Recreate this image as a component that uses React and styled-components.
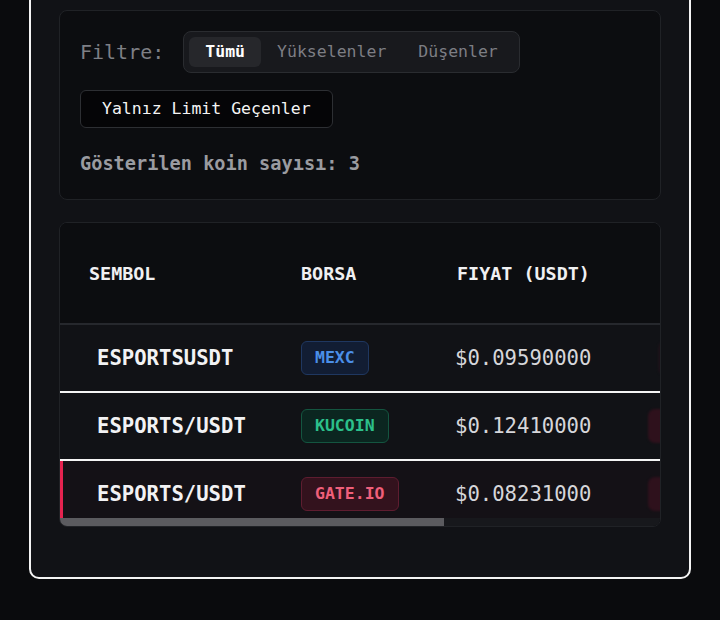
import React from 'react'
import styled, { createGlobalStyle } from 'styled-components'

const GlobalStyle = createGlobalStyle`
  html, body {
    margin: 0;
    padding: 0;
    background: #0a0b0d;
    font-family: "DejaVu Sans Mono", "Liberation Mono", monospace;
    overflow: hidden;
  }
  * { box-sizing: border-box; }
`;

const Card = styled.div`
margin: -22px 29px 0;
padding: 30px 28px 50px;
background: #111216;
border: 2px solid #f4f4f4;
border-radius: 10px;
display: flex;
flex-direction: column;
gap: 22px;
`;

const Panel = styled.div`
background: #0c0d10;
border: 1px solid #202226;
border-radius: 8px;
`;

const FilterPanel = styled(Panel)`
padding: 20px 20px 23px;
display: flex;
flex-direction: column;
align-items: flex-start;
`;

const FilterRow = styled.div`
display: flex;
align-items: center;
gap: 19px;
`;

const Label = styled.span`
color: #7e7f85;
font-size: 20px;
`;

const Segmented = styled.div`
display: flex;
padding: 5px;
background: #18191d;
border: 1px solid #2a2c30;
border-radius: 8px;
`;

const Segment = styled.div`
height: 30px;
line-height: 30px;
padding: 0 16px;
font-size: 16.5px;
border-radius: 6px;
color: ${({ active }) => (active ? '#ffffff' : '#7d7e84')};
font-weight: ${({ active }) => (active ? 700 : 400)};
background: ${({ active }) => (active ? '#26272b' : 'transparent')};
`;

const LimitButton = styled.div`
margin-top: 17px;
height: 38px;
line-height: 36px;
padding: 0 21px;
font-size: 16.5px;
color: #f4f4f4;
background: #050507;
border: 1px solid #2d2f33;
border-radius: 6px;
`;

const Count = styled.div`
margin-top: 24px;
line-height: 24px;
font-size: 18.6px;
font-weight: 700;
color: #9a9ba0;
`;

const TablePanel = styled(Panel)`
overflow: hidden;
`;

const Scroller = styled.div`
height: 295px;
overflow: hidden;
`;

const ScrollTrack = styled.div`
height: 8px;
background: #17181c;
`;

const ScrollThumb = styled.div`
height: 100%;
width: 64%;
background: #5b5b5f;
`;

const Table = styled.div`
width: 937px;
`;

const Row = styled.div`
display: grid;
grid-template-columns: 221px 156px 191px 1fr;
align-items: center;
height: ${({ head }) => (head ? '102px' : '68px')};
background: ${({ head, alert }) => (head ? '#0c0d10' : alert ? '#141116' : '#111216')};
border-bottom: 2px solid ${({ head }) => (head ? '#26282d' : '#f4f4f4')};
box-shadow: ${({ alert }) => (alert ? 'inset 3px 0 0 #e5234f' : 'none')};
`;

const HeadCell = styled.div`
padding-left: ${({ pad }) => pad}px;
font-size: 18.4px;
font-weight: 700;
color: #f0f0f2;
`;

const Cell = styled.div`
padding-left: ${({ pad }) => pad}px;
display: flex;
`;

const Symbol = styled.span`
font-size: 20.6px;
font-weight: 700;
color: #f2f2f4;
`;

const Price = styled.span`
font-size: 20.6px;
color: #d6d6da;
`;

const badgeColors = {
  blue: { bg: '#121d33', border: '#1f3760', fg: '#4b8fe8' },
  green: { bg: '#0b2620', border: '#145540', fg: '#2cc08b' },
  red: { bg: '#33121d', border: '#5e1d30', fg: '#ef5f7a' },
};

const Badge = styled.span`
height: 34px;
line-height: 32px;
padding: 0 13px;
font-size: 16.5px;
font-weight: 700;
border-radius: 6px;
background: ${({ tone }) => badgeColors[tone].bg};
border: 1px solid ${({ tone }) => badgeColors[tone].border};
color: ${({ tone }) => badgeColors[tone].fg};
`;

/* 24h change pill, mostly scrolled out of view */
const ChangeChip = styled.span`
width: 92px;
height: 34px;
border-radius: 7px;
background: ${({ faint }) => (faint ? '#1c1219' : '#2e111c')};
filter: blur(1px);
`;

const coins = [
  { symbol: 'ESPORTSUSDT', exchange: 'MEXC', tone: 'blue', price: '$0.09590000', changePad: 30, faint: true },
  { symbol: 'ESPORTS/USDT', exchange: 'KUCOIN', tone: 'green', price: '$0.12410000', changePad: 20 },
  { symbol: 'ESPORTS/USDT', exchange: 'GATE.IO', tone: 'red', price: '$0.08231000', changePad: 20, alert: true },
];

const App = () => {
  return (
    <>
      <GlobalStyle />
      <Card>
        <FilterPanel>
          <FilterRow>
            <Label>Filtre:</Label>
            <Segmented>
              <Segment active>Tümü</Segment>
              <Segment>Yükselenler</Segment>
              <Segment>Düşenler</Segment>
            </Segmented>
          </FilterRow>
          <LimitButton>Yalnız Limit Geçenler</LimitButton>
          <Count>Gösterilen koin sayısı: 3</Count>
        </FilterPanel>

        <TablePanel>
          <Scroller>
            <Table>
              <Row head>
                <HeadCell pad={29}>SEMBOL</HeadCell>
                <HeadCell pad={20}>BORSA</HeadCell>
                <HeadCell pad={20}>FIYAT (USDT)</HeadCell>
                <HeadCell />
              </Row>
              {coins.map((c, i) => (
                <Row key={i} alert={c.alert}>
                  <Cell pad={37}><Symbol>{c.symbol}</Symbol></Cell>
                  <Cell pad={20}><Badge tone={c.tone}>{c.exchange}</Badge></Cell>
                  <Cell pad={18}><Price>{c.price}</Price></Cell>
                  <Cell pad={c.changePad}><ChangeChip faint={c.faint} /></Cell>
                </Row>
              ))}
            </Table>
          </Scroller>
          <ScrollTrack>
            <ScrollThumb />
          </ScrollTrack>
        </TablePanel>
      </Card>
    </>
  )
}

export default App
